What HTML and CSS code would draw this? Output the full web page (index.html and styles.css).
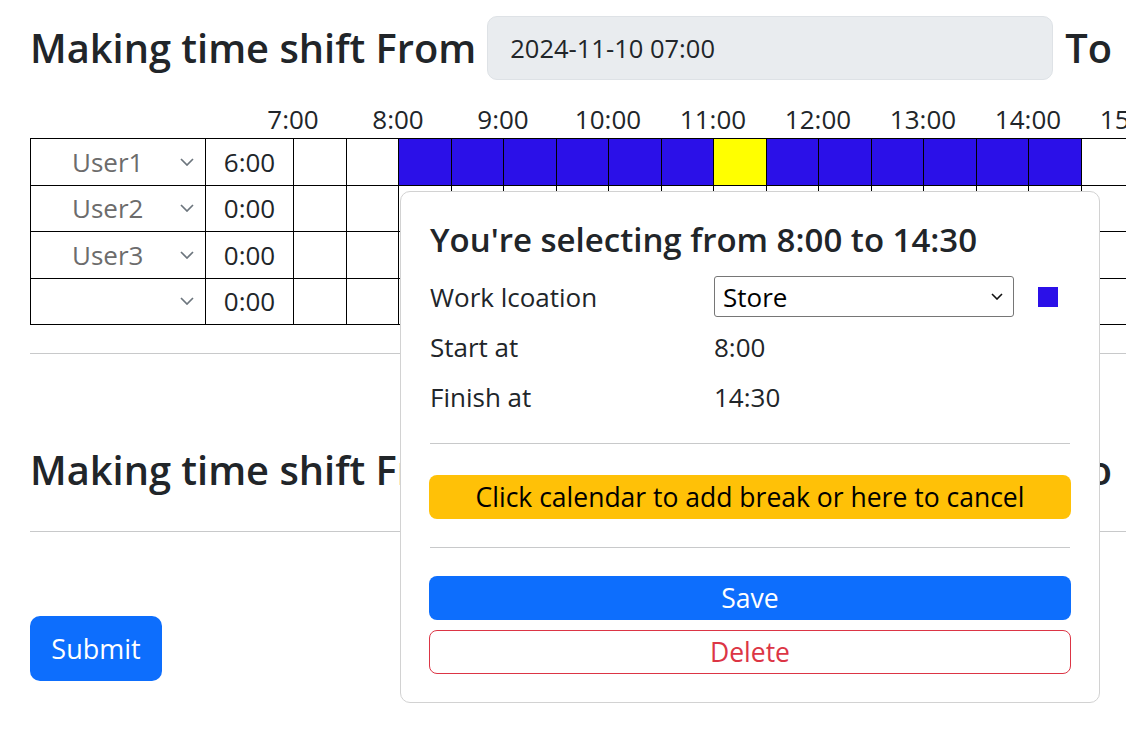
FILE: index.html
```html
<!DOCTYPE html>
<html lang="en">
<head>
<meta charset="utf-8">
<title>Shift editor</title>
<link rel="stylesheet" href="styles.css">
</head>
<body>
<div class="page">
  <div class="range-row">
    <h3 class="title">Making time shift From</h3>
    <div class="date-input">2024-11-10 07:00</div>
    <h3 class="title to">To</h3>
    <div class="date-input"></div>
  </div>

  <div class="hours">
    <span>7:00</span><span>8:00</span><span>9:00</span><span>10:00</span><span>11:00</span><span>12:00</span><span>13:00</span><span>14:00</span><span>15:00</span><span>16:00</span>
  </div>

  <table class="grid">
    <colgroup>
      <col class="c-user"><col class="c-total">
      <col class="c-slot"><col class="c-slot"><col class="c-slot"><col class="c-slot"><col class="c-slot"><col class="c-slot"><col class="c-slot"><col class="c-slot"><col class="c-slot"><col class="c-slot"><col class="c-slot"><col class="c-slot"><col class="c-slot"><col class="c-slot"><col class="c-slot"><col class="c-slot"><col class="c-slot"><col class="c-slot">
    </colgroup>
    <tr>
      <td><div class="user-select"><span>User1</span><svg class="chev" viewBox="0 0 14 8"><polyline points="1,1 7,7 13,1"/></svg></div></td>
      <td class="total">6:00</td>
      <td></td><td></td><td class="on"></td><td class="on"></td><td class="on"></td><td class="on"></td><td class="on"></td><td class="on"></td><td class="brk"></td><td class="on"></td><td class="on"></td><td class="on"></td><td class="on"></td><td class="on"></td><td class="on"></td><td></td><td></td><td></td>
    </tr>
    <tr>
      <td><div class="user-select"><span>User2</span><svg class="chev" viewBox="0 0 14 8"><polyline points="1,1 7,7 13,1"/></svg></div></td>
      <td class="total">0:00</td>
      <td></td><td></td><td></td><td></td><td></td><td></td><td></td><td></td><td></td><td></td><td></td><td></td><td></td><td></td><td></td><td></td><td></td><td></td>
    </tr>
    <tr>
      <td><div class="user-select"><span>User3</span><svg class="chev" viewBox="0 0 14 8"><polyline points="1,1 7,7 13,1"/></svg></div></td>
      <td class="total">0:00</td>
      <td></td><td></td><td></td><td></td><td></td><td></td><td></td><td></td><td></td><td></td><td></td><td></td><td></td><td></td><td></td><td></td><td></td><td></td>
    </tr>
    <tr>
      <td><div class="user-select"><span></span><svg class="chev" viewBox="0 0 14 8"><polyline points="1,1 7,7 13,1"/></svg></div></td>
      <td class="total">0:00</td>
      <td></td><td></td><td></td><td></td><td></td><td></td><td></td><td></td><td></td><td></td><td></td><td></td><td></td><td></td><td></td><td></td><td></td><td></td>
    </tr>
  </table>

  <hr class="sep first">

  <div class="range-row">
    <h3 class="title">Making time shift From</h3>
    <div class="date-input">2024-11-11 07:00</div>
    <h3 class="title to">To</h3>
    <div class="date-input"></div>
  </div>

  <hr class="sep second">

  <button class="btn btn-submit">Submit</button>
</div>

<div class="popover">
  <h4 class="pop-title">You're selecting from 8:00 to 14:30</h4>
  <div class="fields">
    <div class="lbl">Work lcoation</div>
    <div class="native-select"><span>Store</span><svg class="chev-dark" viewBox="0 0 12 7"><polyline points="1,1 6,6 11,1"/></svg></div>
    <div class="swatch"></div>
    <div class="lbl">Start at</div>
    <div class="val">8:00</div>
    <div></div>
    <div class="lbl">Finish at</div>
    <div class="val">14:30</div>
    <div></div>
  </div>
  <hr class="pop-hr top">
  <button class="btn btn-warn">Click calendar to add break or here to cancel</button>
  <hr class="pop-hr mid">
  <button class="btn btn-save">Save</button>
  <button class="btn btn-delete">Delete</button>
</div>
</body>
</html>
```

FILE: styles.css
```css
html, body {
  margin: 0;
  overflow: hidden;
}

body {
  width: 1126px;
  height: 730px;
  position: relative;
  background: #fff;
  color: #212529;
  font-family: "Open Sans", "Noto Sans", sans-serif;
  font-size: 26px;
}

.page {
  width: 1600px;
  padding: 16px 0 0 30px;
}

.range-row {
  display: flex;
  align-items: center;
  height: 64px;
}

.title {
  margin: 0;
  font-size: 39.8px;
  font-weight: 600;
  line-height: 1.2;
  white-space: nowrap;
}

.title.to {
  margin: 0 12px 0 12px;
}

.date-input {
  box-sizing: border-box;
  flex: none;
  width: 566px;
  height: 64px;
  margin-left: 11px;
  padding-left: 22px;
  display: flex;
  align-items: center;
  background: #e9ecef;
  border: 1px solid #dee2e6;
  border-radius: 10px;
  font-size: 25.5px;
}

.hours {
  display: flex;
  height: 34px;
  margin: 24px 0 0 210.5px;
  line-height: 30px;
  font-size: 26px;
}

.hours span {
  flex: none;
  width: 105px;
  text-align: center;
}

.grid {
  border-collapse: collapse;
  table-layout: fixed;
  width: 1208px;
}

.c-user { width: 175px; }
.c-total { width: 88px; }
.c-slot { width: 52.5px; }

.grid td {
  height: 45.5px;
  padding: 0;
  border: 1px solid #000;
}

.grid td.on { background: #2b10e8; }
.grid td.brk { background: #ffff00; }

.total {
  text-align: center;
  font-size: 26px;
}

.user-select {
  display: flex;
  align-items: center;
  justify-content: space-between;
  padding: 0 11px 0 41px;
  color: #6c6c6c;
  font-size: 26px;
}

.chev {
  width: 14px;
  height: 8px;
  fill: none;
  stroke: #6c757d;
  stroke-width: 1.7;
}

.sep {
  border: 0;
  border-top: 1px solid #c8c9ca;
  margin: 0;
}

.sep.first { margin: 28px 0 84px; }
.sep.second { margin: 29px 0 84px; }

.btn {
  display: block;
  box-sizing: border-box;
  border: 1px solid transparent;
  font-family: inherit;
  cursor: pointer;
}

.btn-submit {
  width: 132px;
  height: 65px;
  padding: 0;
  border-radius: 10px;
  background: #0d6efd;
  color: #fff;
  font-size: 27px;
}

.popover {
  position: absolute;
  left: 400px;
  top: 191px;
  width: 700px;
  height: 512px;
  box-sizing: border-box;
  padding: 27px 29px 0;
  background: #fff;
  border: 1px solid #d2d2d2;
  border-radius: 10px;
}

.pop-title {
  margin: 0;
  font-size: 33px;
  font-weight: 600;
  line-height: 42px;
  white-space: nowrap;
}

.fields {
  display: grid;
  grid-template-columns: 284px 300px 44px;
  grid-auto-rows: 41px;
  row-gap: 9px;
  align-items: center;
  margin-top: 15px;
  font-size: 26px;
}

.native-select {
  box-sizing: border-box;
  height: 41px;
  display: flex;
  align-items: center;
  justify-content: space-between;
  padding: 0 10px 0 8px;
  border: 1px solid #767676;
  border-radius: 3px;
  color: #000;
}

.chev-dark {
  width: 12px;
  height: 7px;
  fill: none;
  stroke: #111;
  stroke-width: 1.6;
}

.swatch {
  width: 20px;
  height: 20px;
  margin-left: 24px;
  background: #2b10e8;
}

.pop-hr {
  border: 0;
  border-top: 1px solid #c8c9ca;
}

.pop-hr.top { margin: 26px 0 31px; }
.pop-hr.mid { margin: 28px 0 28px; }

.btn-warn,
.btn-save,
.btn-delete {
  width: 642px;
  height: 44px;
  padding: 0;
  margin-left: -1px;
  border-radius: 8px;
  font-size: 26.5px;
  line-height: 1;
}

.btn-warn {
  background: #ffc107;
  color: #000;
}

.btn-save {
  background: #0d6efd;
  color: #fff;
}

.btn-delete {
  margin-top: 10px;
  background: #fff;
  border-color: #dc3545;
  color: #dc3545;
}
```
